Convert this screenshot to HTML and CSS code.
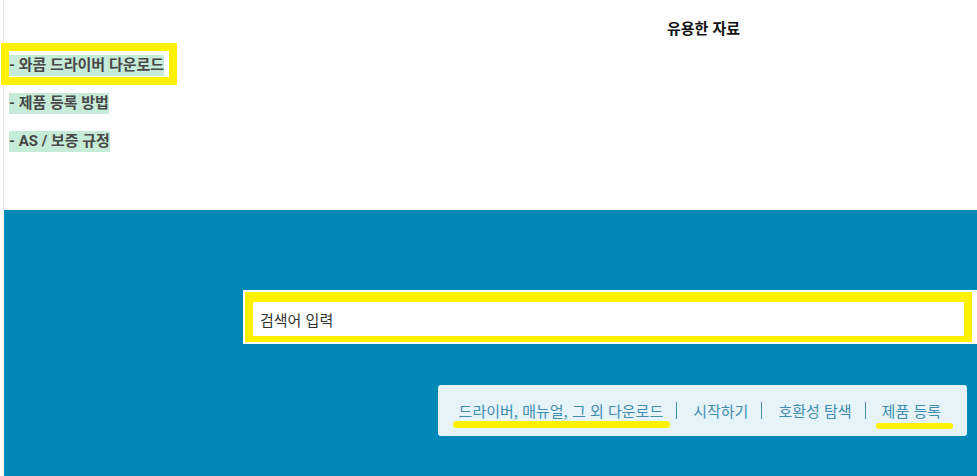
FILE: index.html
```html
<!DOCTYPE html>
<html lang="ko">
<head>
    <meta charset="UTF-8">
    <meta name="viewport" content="width=device-width, initial-scale=1.0">
    <title>유용한 자료</title>
    <link rel="stylesheet" href="styles.css">
</head>
<body>
    <section class="resources">
        <ul class="resources-links">
            <li><a href="#" class="res-link marked">- 와콤 드라이버 다운로드</a></li>
            <li><a href="#" class="res-link">- 제품 등록 방법</a></li>
            <li><a href="#" class="res-link">- AS / 보증 규정</a></li>
        </ul>
        <h2 class="resources-title">유용한 자료</h2>
    </section>

    <section class="support">
        <div class="search-wrap">
            <div class="search-field">
                <input type="text" id="search-input" placeholder="검색어 입력">
            </div>
        </div>

        <nav class="quick-links">
            <a href="#" class="quick-link underlined">드라이버, 매뉴얼, 그 외 다운로드</a>
            <span class="divider"></span>
            <a href="#" class="quick-link">시작하기</a>
            <span class="divider"></span>
            <a href="#" class="quick-link">호환성 탐색</a>
            <span class="divider"></span>
            <a href="#" class="quick-link underlined short">제품 등록</a>
        </nav>
    </section>
</body>
</html>
```

FILE: styles.css
```css
body {
    margin: 0;
    background-color: #fff;
    font-family: Roboto, "Noto Sans CJK KR", sans-serif;
    overflow: hidden;
}

/* 상단 - 유용한 자료 */
.resources {
    margin-left: 3px;
    border-left: 1px solid #e4e4e4;
    height: 210px;
    display: grid;
    grid-template-columns: 426px 1fr;
}

.resources-links {
    list-style: none;
    margin: 0;
    padding: 55px 0 0 5px;
    display: flex;
    flex-direction: column;
    gap: 17px;
}

.res-link {
    position: relative;
    display: inline-block;
    font-size: 15px;
    line-height: 21px;
    font-weight: bold;
    color: #484848;
    text-decoration: none;
    background-color: #c6ecd9;
}

/* 노란 표시 상자 */
.marked::after {
    content: "";
    position: absolute;
    top: -12px;
    left: -8px;
    right: -13px;
    bottom: -9px;
    border: 8px solid #fff200;
}

.resources-title {
    margin: 0;
    padding-top: 17px;
    text-align: center;
    font-family: "Noto Sans CJK KR", sans-serif;
    font-size: 15px;
    line-height: 21px;
    font-weight: bold;
    color: #111;
}

/* 하단 - 파란 영역 */
.support {
    margin-left: 4px;
    height: 266px;
    background-color: #0089b7;
    padding-top: 80px;
    box-sizing: border-box;
    display: flex;
    flex-direction: column;
}

.search-wrap {
    margin-left: 239px;
    background-color: #fff;
    padding: 2px 5px 2px 2px;
}

.search-field {
    border-style: solid;
    border-color: #fff200;
    border-width: 10px 8px 6px 8px;
    background-color: #fff;
}

#search-input {
    display: block;
    width: 100%;
    height: 34px;
    box-sizing: border-box;
    border: none;
    outline: none;
    padding: 0 7px;
    font-family: "Noto Sans CJK KR", sans-serif;
    font-size: 15px;
    color: #333;
}

#search-input::placeholder {
    color: #333;
}

.quick-links {
    margin: 41px 10px 0 auto;
    height: 51px;
    padding: 0 26px 0 21px;
    background-color: #e6f3f8;
    border-radius: 3px;
    display: flex;
    align-items: center;
}

.quick-link {
    position: relative;
    font-family: "Noto Sans CJK KR", sans-serif;
    font-size: 15px;
    line-height: 20px;
    color: #3f8db0;
    text-decoration: none;
}

.divider {
    width: 1px;
    height: 17px;
    margin: 0 16px 0 13px;
    background-color: #3f8db0;
}

/* 노란 밑줄 표시 */
.underlined::after {
    content: "";
    position: absolute;
    top: 20px;
    left: -6px;
    right: -7px;
    height: 7px;
    border-radius: 4px;
    background-color: #fff200;
}

.underlined.short::after {
    top: 22px;
    height: 6px;
    right: -12px;
}
```
